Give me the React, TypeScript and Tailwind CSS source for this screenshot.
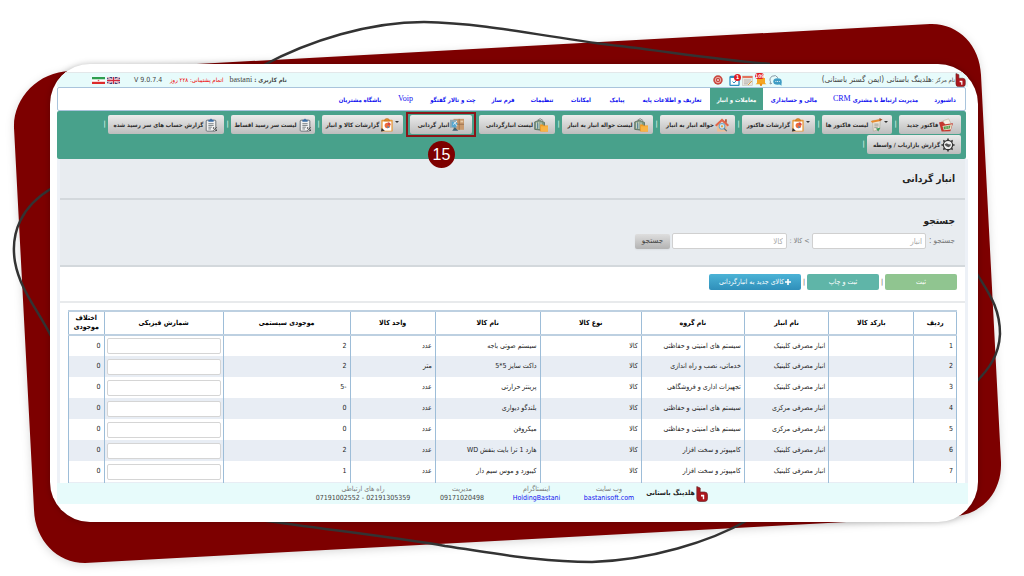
import type { ReactNode } from 'react';

type IconProps = { className?: string };

function InvoiceIcon({ className }: IconProps) {
  return (
    <svg viewBox="0 0 16 16" className={className} aria-hidden="true">
      <path d="M5 3l6-2 3 6-8 2z" fill="#f5f0e6" stroke="#b9a98c" strokeWidth=".6" />
      <path d="M0 5l4-1 3 3 9-1-3 9-10 .5z" fill="#c4382f" />
      <path d="M4 9l11-2-1.500 6-8 1z" fill="#e9e1c8" />
      <path d="M5 10l8-1.500-.8 3.500-6.200 1z" fill="#4d9b4a" />
      <path d="M8 9.500v3M10.500 9v3" stroke="#e9e1c8" strokeWidth=".7" />
    </svg>
  );
}

function ListIcon({ className }: IconProps) {
  return (
    <svg viewBox="0 0 16 16" className={className} aria-hidden="true">
      <path d="M4 3l9-1-1 11-7 2z" fill="#ece6d8" stroke="#a39b8b" strokeWidth=".6" />
      <path d="M2 3.500l10-2 1.500 2-10 2z" fill="#e88b2d" />
      <path d="M12 0l3.500 2-3.500 1.500z" fill="#a14a24" />
      <path d="M6 7h5M6 9h5M6 11h4" stroke="#8a8a8a" strokeWidth=".9" />
      <path d="M8 12l5-1-2.500 4.500z" fill="#3b9b5c" />
    </svg>
  );
}

function ReportIcon({ className }: IconProps) {
  return (
    <svg viewBox="0 0 16 16" className={className} aria-hidden="true">
      <rect x="1.500" y="2" width="13" height="13.500" rx="1" fill="#e99a3a" />
      <rect x="3" y="4" width="10" height="10.500" fill="#fff" />
      <path d="M5 3.500q0-3 3-3t3 3z" fill="#e2892a" stroke="#b5651a" strokeWidth=".5" />
      <circle cx="8.500" cy="8.500" r="3.200" fill="#ef6c3a" />
      <path d="M9 8V4.800A3.200 3.200 0 0 1 12.200 8z" fill="#d6484a" />
      <path d="M8.500 8.500v3.200l2.500-.9z" fill="#4a90c4" />
      <path d="M1 15.500l1-4 3.500 3z" fill="#333" />
    </svg>
  );
}

function HouseIcon({ className }: IconProps) {
  return (
    <svg viewBox="0 0 16 16" className={className} aria-hidden="true">
      <rect x="2.500" y="6" width="11" height="9.500" fill="#eebd94" />
      <path d="M11.500 1.500h2v4h-2z" fill="#b3563a" />
      <path d="M0 8l8-7.500L16 8l-1.500 1.800L8 4 1.500 9.800z" fill="#e0654a" />
      <circle cx="8" cy="9.500" r="3.300" fill="#cfe8f3" stroke="#6fa8c9" strokeWidth="1.200" />
      <circle cx="8" cy="9.500" r="1.300" fill="#e9a13b" />
      <path d="M10.500 12l3 3" stroke="#55707f" strokeWidth="1.300" />
    </svg>
  );
}

function FolderSearchIcon({ className }: IconProps) {
  return (
    <svg viewBox="0 0 16 16" className={className} aria-hidden="true">
      <path d="M.8 4.500L6 2.500l6 2.500v9.500L.8 13z" fill="#7f9a83" stroke="#4f6152" strokeWidth=".8" />
      <path d="M3 5v7M5.500 4.500v8M8 5v8" stroke="#e9e9e0" strokeWidth=".9" />
      <path d="M4.200 6v6" stroke="#3e7ea8" strokeWidth=".9" />
      <path d="M4 2.500L7 .8l3.500 2.200" stroke="#777" strokeWidth=".9" fill="none" />
      <path d="M7 7.500h3l1 1h5v7H7z" fill="#f39a20" />
      <path d="M8 9.500h8v6H8z" fill="#f9b445" />
    </svg>
  );
}

function ShelfIcon({ className }: IconProps) {
  return (
    <svg viewBox="0 0 16 16" className={className} aria-hidden="true">
      <rect x="4" y="1" width="12" height="12.500" fill="#c99a6e" />
      <path d="M10.500 1v12.500M4 7.200h12" stroke="#8f6848" strokeWidth=".8" />
      <rect x="12" y="3" width="3" height="2" fill="#e8cba8" />
      <path d="M0 2h8v9H0z" fill="#93a9b4" />
      <path d="M2 4l7 2-3 5-4-1z" fill="#56a7d0" />
      <path d="M5.500 10.500l4 4h-7z" fill="#3f6275" />
      <path d="M3.500 7.500L8 3.500M5 5l3 4" stroke="#fff" strokeWidth=".9" />
    </svg>
  );
}

function ClipboardIcon({ className }: IconProps) {
  return (
    <svg viewBox="0 0 16 16" className={className} aria-hidden="true">
      <rect x="2.500" y="2.500" width="11" height="12.500" rx="1" fill="#f1f1f1" stroke="#5f666b" strokeWidth="1" />
      <path d="M5 2h1.500L8 .5 9.500 2H11v2.200H5z" fill="#3c6ea5" />
      <path d="M5 6.500h6M5 8.500h6M5 10.500h4M5 12.500h3" stroke="#5f666b" strokeWidth=".9" />
      <path d="M10.500 14.500l4-4" stroke="#333" strokeWidth=".9" />
      <circle cx="11" cy="11.500" r=".9" fill="#333" />
      <circle cx="14" cy="14" r=".9" fill="#333" />
    </svg>
  );
}

function GearIcon({ className }: IconProps) {
  return (
    <svg viewBox="0 0 16 16" className={className} aria-hidden="true">
      <circle cx="8" cy="8" r="5.300" fill="#eee" stroke="#333" strokeWidth="1.300" />
      <path
        d="M8 .5v2M8 13.500v2M.5 8h2M13.500 8h2M2.700 2.700l1.400 1.400M11.900 11.900l1.400 1.400M2.700 13.300l1.400-1.400M11.900 4.100l1.400-1.400"
        stroke="#333"
        strokeWidth="1.800"
      />
      <path d="M4 7l2.500-1 2 1 3 .5-1 2-2 1-3-1.500z" fill="#555" />
    </svg>
  );
}

function BrandMark({ className }: IconProps) {
  return (
    <svg viewBox="0 0 12 16" className={className} aria-hidden="true">
      <path
        d="M.8.6L4.200 2v4h4.300q3 0 3 3v3.500q0 3-3 3H3.800q-3 0-3-3z"
        fill="#ab161c"
        stroke="#6b2a2c"
        strokeWidth=".7"
      />
      <path d="M5 8.800h3.200v4.500H6.800v-2.800H5z" fill="#fff" />
    </svg>
  );
}

function FlagUk({ className }: IconProps) {
  return (
    <svg viewBox="0 0 13 7" className={className} preserveAspectRatio="none" aria-hidden="true">
      <rect width="13" height="7" fill="#39427c" />
      <path d="M0 0l13 7M13 0L0 7" stroke="#fff" strokeWidth="1.500" />
      <path d="M0 0l13 7M13 0L0 7" stroke="#c8334a" strokeWidth=".5" />
      <path d="M6.500 0v7M0 3.500h13" stroke="#fff" strokeWidth="2.400" />
      <path d="M6.500 0v7M0 3.500h13" stroke="#d0293f" strokeWidth="1.300" />
    </svg>
  );
}

function FlagIran({ className }: IconProps) {
  return (
    <svg viewBox="0 0 13 7" className={className} preserveAspectRatio="none" aria-hidden="true">
      <rect width="13" height="7" fill="#fff" />
      <rect width="13" height="2.300" fill="#2e9e4f" />
      <rect y="4.800" width="13" height="2.200" fill="#dc2b2b" />
      <circle cx="6.500" cy="3.500" r=".8" fill="#dc5b5b" />
    </svg>
  );
}

function ChatIcon({ className }: IconProps) {
  return (
    <svg viewBox="0 0 13 11" className={className} aria-hidden="true">
      <path d="M9 2.800a4.200 4 0 1 0-7.500 4L1 9l2-.8" fill="none" stroke="#8a9aa5" strokeWidth="1" />
      <ellipse cx="8.500" cy="6.500" rx="4.200" ry="3.300" fill="#3f9cc4" />
      <path d="M10 9l2.500 1.800V7z" fill="#3f9cc4" />
      <path d="M6.500 6.500h.8M8.200 6.500h.8M9.900 6.500h.8" stroke="#fff" strokeWidth="1" />
    </svg>
  );
}

function BellIcon({ className }: IconProps) {
  return (
    <svg viewBox="0 0 12 12" className={className} aria-hidden="true">
      <path d="M2 9V4h8v5l1.500 1.200H.5z" fill="#f5a623" />
      <circle cx="6" cy="10.800" r="1.200" fill="#e58a14" />
    </svg>
  );
}

function CalendarIcon({ className }: IconProps) {
  return (
    <svg viewBox="0 0 11 11" className={className} aria-hidden="true">
      <rect x=".5" y="1" width="10" height="9.500" fill="#e9e6e1" stroke="#b9b5ae" strokeWidth=".5" />
      <rect x=".5" y="1" width="10" height="2" fill="#e3745c" />
      <path d="M2 5h7M2 7h7M2 8.800h4" stroke="#aaa6a0" strokeWidth=".8" />
      <path d="M6 10l4-4" stroke="#e0a040" strokeWidth="1" />
    </svg>
  );
}

function TaskIcon({ className }: IconProps) {
  return (
    <svg viewBox="0 0 11 11" className={className} aria-hidden="true">
      <rect x="1" y="1.500" width="9" height="9" rx=".8" fill="#fff" stroke="#2f8fc0" strokeWidth="1.300" />
      <path d="M1 1h6v2H1z" fill="#2f8fc0" />
      <path d="M3.500 6.500l1.500 1.500 3-3" fill="none" stroke="#2f8fc0" strokeWidth="1" />
    </svg>
  );
}

function TargetIcon({ className }: IconProps) {
  return (
    <svg viewBox="0 0 11 11" className={className} aria-hidden="true">
      <circle cx="5.500" cy="5.500" r="5.200" fill="#c9473f" />
      <circle cx="5.500" cy="5.500" r="3" fill="none" stroke="#f4c9c4" strokeWidth=".9" />
      <circle cx="5.500" cy="5.500" r="1.200" fill="#f4c9c4" />
    </svg>
  );
}

function Backdrop() {
  return (
    <svg viewBox="0 0 1024 576" preserveAspectRatio="none" className="absolute inset-0 h-full w-full" aria-hidden="true">
      <path
        d="M70 71L930 24C958 23 980 45 981 75L1001 462C1002 490 985 512 958 516L85 563C57 563 35 540 34 510L14 128C13 98 38 72 70 71Z"
        fill="#7d0000"
        className="drop-shadow-[0_2px_4px_rgba(0,0,0,0.15)]"
      />
      <g fill="none" stroke="#333" strokeWidth="2.500">
        <path d="M262 66C310 40 370 22 424 22C490 23 560 40 620 46C670 52 720 60 770 64" />
        <path d="M52 188C22 206 10 232 15 262C20 290 38 310 52 338" />
        <path d="M976 272C986 290 1000 305 1000 334C999 356 988 370 976 382" />
        <path d="M260 520C330 530 400 538 445 546C500 554 540 562 592 562C650 560 710 542 748 520" />
      </g>
    </svg>
  );
}

const navItems = [
  { label: 'داشبورد', width: 'w-[38px]' },
  { label: 'مدیریت ارتباط با مشتری', latin: 'CRM', width: 'w-[101px]' },
  { label: 'مالی و حسابداری', width: 'w-[62px]' },
  { label: 'معاملات و انبار', width: 'w-[53px]', active: true },
  { label: 'تعاریف و اطلاعات پایه', width: 'w-[76px]' },
  { label: 'پیامک', width: 'w-[34px]' },
  { label: 'امکانات', width: 'w-[38px]' },
  { label: 'تنظیمات', width: 'w-[40px]' },
  { label: 'فرم ساز', width: 'w-[38px]' },
  { label: 'چت و تالار گفتگو', width: 'w-[62px]' },
  { label: '', latin: 'Voip', width: 'w-[33px]' },
  { label: 'باشگاه مشتریان', width: 'w-[58px]' },
];

type Tool = {
  label: string;
  width: string;
  icon: (props: IconProps) => ReactNode;
  menu?: boolean;
  marked?: boolean;
  noDivider?: boolean;
};

const tools: Tool[] = [
  { label: 'فاکتور جدید', width: 'w-[62px]', icon: InvoiceIcon },
  { label: 'لیست فاکتور ها', width: 'w-[70px]', icon: ListIcon, menu: true },
  { label: 'گزارشات فاکتور', width: 'w-[73px]', icon: ReportIcon, menu: true },
  { label: 'حواله انبار به انبار', width: 'w-[75px]', icon: HouseIcon },
  { label: 'لیست حواله انبار به انبار', width: 'w-[91px]', icon: FolderSearchIcon },
  { label: 'لیست انبارگردانی', width: 'w-[76px]', icon: FolderSearchIcon, noDivider: true },
  { label: 'انبار گردانی', width: 'w-[62px]', icon: ShelfIcon, marked: true, noDivider: true },
  { label: 'گزارشات کالا و انبار', width: 'w-[81px]', icon: ReportIcon, menu: true },
  { label: 'لیست سر رسید اقساط', width: 'w-[84px]', icon: ClipboardIcon },
  { label: 'گزارش حساب های سر رسید شده', width: 'w-[116px]', icon: ClipboardIcon },
  { label: 'گزارش بازاریاب / واسطه', width: 'w-[94px]', icon: GearIcon },
];

function ToolButton({ tool }: { tool: Tool }) {
  const Icon = tool.icon;
  return (
    <div className="flex items-center">
      <div className="relative">
        <button
          type="button"
          className={`flex h-[19px] items-center justify-center gap-px rounded-xs bg-linear-to-b from-[#ebebeb] to-[#bdbdbd] text-[6px] font-bold whitespace-nowrap text-[#2b2b2b] ${tool.width}`}
        >
          {tool.menu && <span className="mb-1.5 border-x-2 border-t-2 border-x-transparent border-t-[#333]" />}
          <Icon className="h-[14px] w-[14px] shrink-0" />
          <span>{tool.label}</span>
        </button>
        {tool.marked && (
          <>
            <span className="absolute -inset-x-1 -inset-y-[3px] border-2 border-[#8b1519]" />
            <span className="absolute top-[26px] left-[18px] flex size-[27px] items-center justify-center rounded-full bg-[#7d0000] font-['Liberation_Sans',sans-serif] text-base text-white">
              15
            </span>
          </>
        )}
      </div>
      <span className={`w-[7px] text-center text-[7px] leading-none text-white ${tool.noDivider ? 'invisible' : ''}`}>|</span>
    </div>
  );
}

const columns = [
  { label: 'ردیف', width: 'w-[4.8%]' },
  { label: 'بارکد کالا', width: 'w-[9.6%]' },
  { label: 'نام انبار', width: 'w-[9.5%]' },
  { label: 'نام گروه', width: 'w-[11.6%]' },
  { label: 'نوع کالا', width: 'w-[11.4%]' },
  { label: 'نام کالا', width: 'w-[11.8%]' },
  { label: 'واحد کالا', width: 'w-[9.6%]' },
  { label: 'موجودی سیستمی', width: 'w-[14.3%]' },
  { label: 'شمارش فیزیکی', width: 'w-[13.4%]' },
  { label: 'اختلاف موجودی', width: 'w-[4%]' },
];

const rows = [
  { store: 'انبار مصرفی کلینیک', group: 'سیستم های امنیتی و حفاظتی', name: 'سیستم صوتی باجه', unit: 'عدد', stock: '2' },
  { store: 'انبار مصرفی کلینیک', group: 'خدماتی، نصب و راه اندازی', name: 'داکت سایز 5*5', unit: 'متر', stock: '2' },
  { store: 'انبار مصرفی کلینیک', group: 'تجهیزات اداری و فروشگاهی', name: 'پرینتر حرارتی', unit: 'عدد', stock: '-5' },
  { store: 'انبار مصرفی مرکزی', group: 'سیستم های امنیتی و حفاظتی', name: 'بلندگو دیواری', unit: 'عدد', stock: '0' },
  { store: 'انبار مصرفی مرکزی', group: 'سیستم های امنیتی و حفاظتی', name: 'میکروفن', unit: 'عدد', stock: '0' },
  { store: 'انبار مصرفی کلینیک', group: 'کامپیوتر و سخت افزار', name: 'هارد 1 ترا بایت بنفش WD', unit: 'عدد', stock: '2' },
  { store: 'انبار مصرفی کلینیک', group: 'کامپیوتر و سخت افزار', name: 'کیبورد و موس سیم دار', unit: 'عدد', stock: '1' },
  { store: '', group: '', name: '', unit: '', stock: '' },
];

const cell = 'border-x border-[#9dbdd8] px-[3px] py-0 whitespace-nowrap overflow-hidden';

function StockTable() {
  return (
    <table className="w-full table-fixed border-collapse border border-[#9dbdd8] text-[7px] leading-[9px] text-[#222]">
      <thead>
        <tr className="h-6 border-y-2 border-[#bdd0e1] text-black">
          {columns.map((c) => (
            <th key={c.label} className={`border-x border-[#9dbdd8] p-0 text-center font-bold ${c.width}`}>
              {c.label}
            </th>
          ))}
        </tr>
      </thead>
      <tbody>
        {rows.map((r, i) => (
          <tr key={i} className="h-[21px] even:bg-[#e8edf4]">
            <td className={cell}>{r.store && i + 1}</td>
            <td className={cell} />
            <td className={cell}>{r.store}</td>
            <td className={cell}>{r.group}</td>
            <td className={cell}>{r.store && 'کالا'}</td>
            <td className={cell}>{r.name}</td>
            <td className={cell}>{r.unit}</td>
            <td className={cell}>{r.stock}</td>
            <td className="border-x border-[#9dbdd8] px-0.5 py-0">
              <input
                type="text"
                aria-label={`شمارش فیزیکی ردیف ${i + 1}`}
                className="block h-4 w-full rounded-xs border border-[#d5d5d5] bg-white"
              />
            </td>
            <td className={cell}>{r.store && '0'}</td>
          </tr>
        ))}
      </tbody>
    </table>
  );
}

const contacts = [
  { title: 'وب سایت', value: 'bastanisoft.com', href: '#website', width: 'w-[72px]' },
  { title: 'اینستاگرام', value: 'HoldingBastani', href: '#instagram', width: 'w-[73px]' },
  { title: 'مدیریت', value: '09171020498', width: 'w-[76px]' },
  { title: 'راه های ارتباطی', value: '07191002552 - 02191305359', width: 'w-[122px]' },
];

export default function App() {
  return (
    <div className="relative flex h-screen min-h-[480px] flex-col overflow-hidden bg-white pt-16 pr-[46px] pb-[54px] pl-[50px] font-['DejaVu_Sans_Condensed','DejaVu_Sans',sans-serif]">
      <Backdrop />
      <main
        dir="rtl"
        className="relative flex min-h-0 flex-1 flex-col overflow-hidden rounded-[40px] bg-white pt-2 pr-2.5 pb-[18px] pl-[7px] shadow-[0_0_6px_rgba(0,0,0,0.25)]"
      >
        <header className="flex h-[15px] shrink-0 items-center border-t border-[#e3e8ea] bg-[#e7fbfb] pr-0.5 text-[7px] leading-none text-[#444]">
          <BrandMark className="h-[14px] w-[11px] shrink-0" />
          <div className="w-[143px] text-[8px] whitespace-nowrap">
            <span className="text-[6px]">نام مرکز :</span>هلدینگ باستانی (ایمن گستر باستانی)
          </div>
          <div className="mr-[30px] flex items-center gap-0.5">
            <ChatIcon className="h-[11px] w-[13px]" />
            <span className="relative">
              <BellIcon className="size-3" />
              <span className="absolute -top-px left-0 rounded-full bg-[#e11b22] text-[5px] leading-[6px] font-bold text-white">109</span>
            </span>
            <CalendarIcon className="size-[11px]" />
            <span className="relative">
              <TaskIcon className="size-[11px]" />
              <span className="absolute -top-px -right-px size-[7px] rounded-full bg-[#e11b22] text-center text-[5px] leading-[7px] font-bold text-white">1</span>
            </span>
            <TargetIcon className="mr-1 size-[10px]" />
          </div>
          <div className="mr-auto flex items-center pl-[35px] whitespace-nowrap">
            <b className="text-[6px]">نام کاربری :</b>
            <span className="mr-0.5 font-['Liberation_Serif',serif] text-[8px]">bastani</span>
            <span className="mr-1.5 text-[6px] text-[#f00000]">اتمام پشتیبانی: ۲۲۸ روز</span>
            <span className="mr-2 w-7 text-left" dir="ltr">V 9.0.7.4</span>
            <FlagUk className="mr-3.5 h-[7px] w-[13px]" />
            <FlagIran className="mr-0.5 h-[7px] w-[13px]" />
          </div>
        </header>

        <nav className="mr-0.5 flex h-6 shrink-0 items-stretch rounded-xs border border-[#a9c4dc] bg-white pr-px text-[6px] font-bold">
          {navItems.map((item) => (
            <a
              key={item.width + item.label}
              href="#menu"
              className={`flex items-center justify-center gap-0.5 whitespace-nowrap ${item.width} ${item.active ? 'bg-[#48a18b] text-white' : 'text-[#1010f0]'}`}
            >
              {item.label && <span>{item.label}</span>}
              {item.latin && <span className="font-['Liberation_Serif',serif] text-[8px] font-normal">{item.latin}</span>}
            </a>
          ))}
        </nav>

        <div className="relative z-10 mr-0.5 flex shrink-0 flex-wrap gap-y-px rounded-xs bg-[#48a18b] pt-1 pr-[5px] pb-[5px]">
          {tools.map((tool) => (
            <ToolButton key={tool.label} tool={tool} />
          ))}
        </div>

        <div className="flex min-h-0 flex-1 flex-col overflow-hidden bg-[#edf1f7] pr-[3px] pl-[3px]">
          <section className="flex h-[41px] shrink-0 items-center border-b-2 border-[#d3d8dc] bg-[#e8ecf0] px-2.5">
            <h1 className="text-[10px] font-bold text-[#222]">انبار گردانی</h1>
          </section>

          <section className="shrink-0 border-b-2 border-[#d3d8dc] bg-[#e8ecf0] px-2.5 pt-3.5 pb-4">
            <h2 className="text-[10px] leading-[14px] font-bold text-[#222]">جستجو</h2>
            <form className="mt-[5px] flex items-center gap-0.5 text-[8px] leading-3 text-[#777]" onSubmit={(e) => e.preventDefault()}>
              <label htmlFor="store" className="w-[27px] whitespace-nowrap">جستجو :</label>
              <input id="store" placeholder="انبار" className="h-4 w-[114px] rounded-xs border border-[#d0d0d0] bg-white px-[3px] placeholder:text-[#aaa]" />
              <label htmlFor="product" className="w-[21px] text-center text-[7px] whitespace-nowrap">&gt; کالا :</label>
              <input id="product" placeholder="کالا" className="h-4 w-[115px] rounded-xs border border-[#d0d0d0] bg-white px-[3px] placeholder:text-[#aaa]" />
              <button type="submit" className="h-[15px] w-[35px] rounded-xs bg-linear-to-b from-[#dedede] to-[#b3b3b3] text-[#444] shadow-xs">
                جستجو
              </button>
            </form>
          </section>

          <section className="flex h-9 shrink-0 items-start border-b-2 border-[#e8eaec] bg-white px-2 pt-[7px] text-[7px] text-white">
            <button type="button" className="h-4 w-[72px] rounded-xs bg-[#90c590]">ثبت</button>
            <span className="w-1.5 text-center leading-4 text-[#555]">|</span>
            <button type="button" className="h-4 w-[72px] rounded-xs bg-[#5fb5a8]">ثبت و چاپ</button>
            <span className="w-1.5 text-center leading-4 text-[#555]">|</span>
            <button type="button" className="flex h-4 w-[92px] items-center justify-center gap-px rounded-xs bg-linear-to-b from-[#4bb3d6] to-[#2f8fba] whitespace-nowrap">
              <svg viewBox="0 0 6 6" className="size-1.5" aria-hidden="true">
                <path d="M3 0v6M0 3h6" stroke="#fff" strokeWidth="1.600" />
              </svg>
              کالای جدید به انبارگردانی
            </button>
          </section>

          <section className="min-h-0 flex-1 overflow-hidden bg-white px-2 pt-[7px]">
            <StockTable />
          </section>
        </div>

        <footer className="flex h-[21px] shrink-0 items-center bg-[#e7fbfb] pr-[260px] text-[7px] leading-[9px] text-[#444]">
          <BrandMark className="h-4 w-3" />
          <b className="w-[51px] text-center whitespace-nowrap text-[#222]">هلدینگ باستانی</b>
          {contacts.map((c) => (
            <div key={c.title} className={`flex flex-col items-center whitespace-nowrap ${c.width}`}>
              <span className="text-[#777]">{c.title}</span>
              {c.href ? (
                <a href={c.href} className="text-[#1010f0]">{c.value}</a>
              ) : (
                <span dir="ltr">{c.value}</span>
              )}
            </div>
          ))}
        </footer>
      </main>
    </div>
  );
}
